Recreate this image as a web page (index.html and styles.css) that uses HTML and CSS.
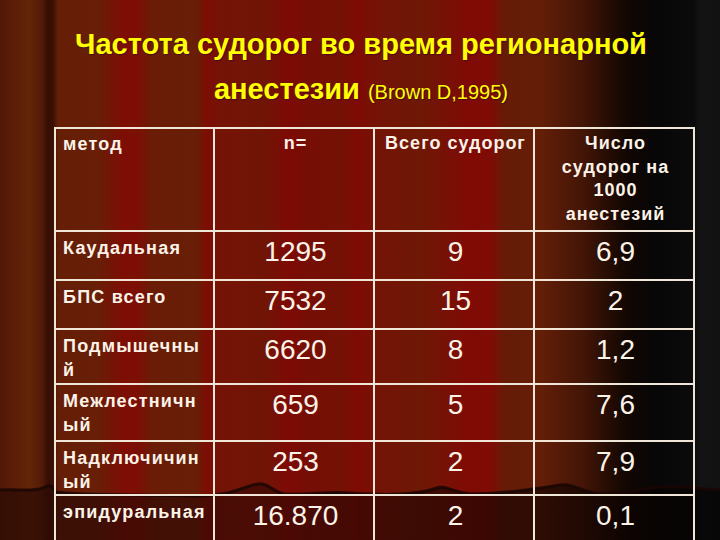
FILE: index.html
```html
<!DOCTYPE html>
<html lang="ru">
<head>
<meta charset="utf-8">
<title>Частота судорог во время регионарной анестезии</title>
<link rel="stylesheet" href="styles.css">
</head>
<body>
<div class="slide">
  <svg class="hem" width="720" height="540" viewBox="0 0 720 540" aria-hidden="true">
    <defs>
      <linearGradient id="below" x1="0" y1="0" x2="1" y2="0">
        <stop offset="0" stop-color="#2a0b04" stop-opacity="0.75"/>
        <stop offset="0.35" stop-color="#2a0603" stop-opacity="0.55"/>
        <stop offset="0.8" stop-color="#120402" stop-opacity="0.7"/>
        <stop offset="1" stop-color="#000" stop-opacity="0.6"/>
      </linearGradient>
    </defs>
    <path class="hem-fill" fill="url(#below)" d="M0 490 C20 489 35 492 45 487 C50 484 52 486 56 492 C80 496 140 494 200 496 C230 496 245 486 258 484 C270 483 272 492 285 494 C310 495 330 491 350 493 C390 496 420 494 437 488 C446 485 452 492 470 494 C500 494 530 490 560 485 C575 483 580 492 600 494 C625 495 640 488 660 487 C690 486 705 490 720 490 L720 540 L0 540 Z"/>
    <path class="hem-line" d="M0 490 C20 489 35 492 45 487 C50 484 52 486 56 492 C80 496 140 494 200 496 C230 496 245 486 258 484 C270 483 272 492 285 494 C310 495 330 491 350 493 C390 496 420 494 437 488 C446 485 452 492 470 494 C500 494 530 490 560 485 C575 483 580 492 600 494 C625 495 640 488 660 487 C690 486 705 490 720 490"/>
  </svg>

  <div class="content">
    <h1 class="title">
      <span class="title-line">Частота судорог во время регионарной</span>
      <span class="title-line">анестезии <span class="ref">(Brown D,1995)</span></span>
    </h1>

    <table class="data">
      <colgroup>
        <col class="c1"><col class="c2"><col class="c3"><col class="c4">
      </colgroup>
      <tr class="r-head">
        <th class="lab">метод</th>
        <th>n=</th>
        <th>Всего судорог</th>
        <th>Число<br>судорог на<br>1000<br>анестезий</th>
      </tr>
      <tr class="r1">
        <td class="lab">Каудальная</td><td>1295</td><td>9</td><td>6,9</td>
      </tr>
      <tr class="r1">
        <td class="lab">БПС всего</td><td>7532</td><td>15</td><td>2</td>
      </tr>
      <tr class="r2">
        <td class="lab">Подмышечны<br>й</td><td>6620</td><td>8</td><td>1,2</td>
      </tr>
      <tr class="r3">
        <td class="lab">Межлестничн<br>ый</td><td>659</td><td>5</td><td>7,6</td>
      </tr>
      <tr class="r4">
        <td class="lab">Надключичин<br>ый</td><td>253</td><td>2</td><td>7,9</td>
      </tr>
      <tr class="r5">
        <td class="lab">эпидуральная</td><td>16.870</td><td>2</td><td>0,1</td>
      </tr>
    </table>
  </div>
</div>
</body>
</html>
```

FILE: styles.css
```css
html, body {
  margin: 0;
  padding: 0;
  background: #000;
}

.slide {
  position: relative;
  width: 720px;
  height: 540px;
  overflow: hidden;
  font-family: "Liberation Sans", Arial, sans-serif;
  background:
    linear-gradient(to right,
      rgba(0,0,0,0) 0px,
      rgba(0,0,0,0) 540px,
      rgba(10,4,2,0.35) 585px,
      rgba(5,3,2,0.85) 628px,
      #070707 658px,
      #0b0b0b 694px,
      #131313 700px,
      #121212 720px),
    linear-gradient(to right,
      #521806 0px,
      #5a1d07 12px,
      #642508 30px,
      #521a07 42px,
      #360e04 48px,
      #3a1005 53px,
      #661e07 58px,
      #681e07 98px,
      #721606 110px,
      #7e0e05 124px,
      #7c0f05 138px,
      #6a1c07 152px,
      #681e07 196px,
      #7e0c05 207px,
      #741306 220px,
      #701506 265px,
      #7e0a05 288px,
      #760e05 305px,
      #741105 340px,
      #7e0b05 358px,
      #741406 380px,
      #6e1806 420px,
      #800a05 470px,
      #7e0c05 490px,
      #661b07 505px,
      #641e07 540px,
      #601e08 580px,
      #561b07 620px,
      #3a1005 720px);
}

.hem {
  position: absolute;
  left: 0;
  top: 0;
  z-index: 0;
}

.hem-line {
  fill: none;
  stroke: #1a0603;
  stroke-width: 3;
  opacity: 0.85;
}

.content {
  position: relative;
  z-index: 1;
  padding-top: 22px;
}

.title {
  margin: 0;
  color: #ffff00;
  font-size: 29px;
  font-weight: bold;
  line-height: 45px;
  text-align: center;
  text-shadow: 1px 1px 1px rgba(40, 0, 60, 0.55);
}

.title-line {
  display: block;
  padding-left: 2px;
}

.ref {
  font-size: 20px;
  font-weight: normal;
}

.data {
  margin: 12px 0 0 54px;
  border-collapse: collapse;
  table-layout: fixed;
  width: 641px;
  color: #fbf3e8;
}

.c1 { width: 159px; }
.c2 { width: 160px; }
.c3 { width: 160px; }
.c4 { width: 160px; }

.data th,
.data td {
  border: 2px solid #efe6d8;
  vertical-align: top;
  text-align: center;
  padding: 4px 4px 0 7px;
}

.data th {
  font-size: 18px;
  font-weight: bold;
  line-height: 23.5px;
  letter-spacing: 1px;
  padding-top: 3px;
}

.data td {
  font-size: 28px;
  font-weight: normal;
  line-height: 32px;
}

.data .lab {
  text-align: left;
  font-size: 18px;
  font-weight: bold;
  line-height: 24px;
  letter-spacing: 1.2px;
}

.r-head { height: 103px; }
.r1 { height: 49px; }
.r2 { height: 55px; }
.r3 { height: 57px; }
.r4 { height: 54px; }
.r5 { height: 56px; }
```
